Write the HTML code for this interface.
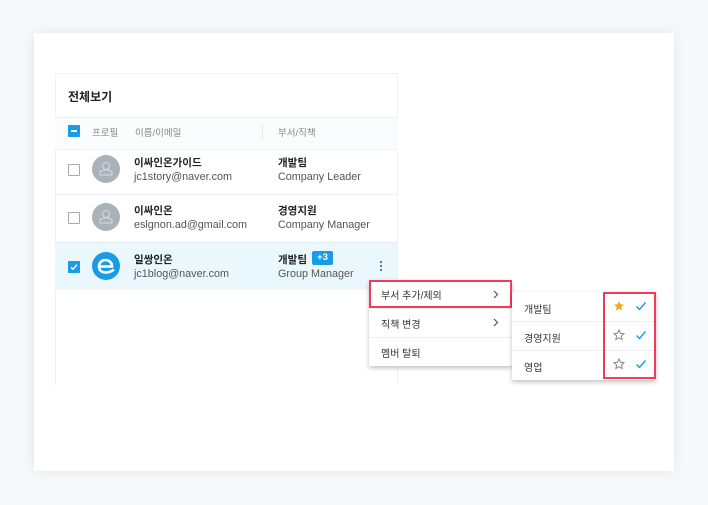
<!DOCTYPE html>
<html><head><meta charset="utf-8"><style>
*{box-sizing:border-box;margin:0;padding:0}
body{width:708px;height:505px;background:#f7f8fb;font-family:"Liberation Sans","Noto Sans CJK KR",sans-serif;position:relative;overflow:hidden;color:#333}
.card{position:absolute;left:34px;top:33px;width:640px;height:438px;background:#fff;box-shadow:0 0 12px rgba(0,0,0,.08)}
.panel{position:absolute;left:55px;top:73px;width:343px;height:312px;border:1px solid #f0f1f3;border-bottom:none;background:#fff}
.abs{position:absolute}
.t{position:absolute;white-space:nowrap}
.cb{position:absolute;width:12px;height:12px;border:1.5px solid #aaa;border-radius:1px;background:#fff}
.cbon{background:#1a9be6;border-color:#1a9be6}
.av{position:absolute;width:28px;height:28px;border-radius:50%;background:#a8b2b9}
.hl{position:absolute;height:1px;background:#eef0f2}
.menu{position:absolute;background:#fff;box-shadow:0 2px 5px rgba(0,0,0,.25);border-radius:2px}
.mi{position:absolute;left:0;right:0;height:1px;background:#eee}
.nm{font-size:10.5px;font-weight:bold;color:#222}
.sb{font-size:10.8px;color:#555}
</style></head><body>
<div class="card"></div>
<div class="panel"></div>
<div class="t" style="left:68px;top:88px;font-size:12px;font-weight:bold;color:#222">전체보기</div>
<div class="hl" style="left:55px;top:117px;width:343px"></div>
<div class="abs" style="left:55px;top:118px;width:343px;height:31px;background:#fbfcfd"></div>
<div class="cb cbon" style="left:68px;top:125px"></div>
<div class="abs" style="left:71px;top:130px;width:6px;height:1.5px;background:#fff"></div>
<div class="t" style="left:92px;top:125px;font-size:9.5px;color:#888">프로필</div>
<div class="t" style="left:135px;top:125px;font-size:9.5px;color:#888">이름/이메일</div>
<div class="abs" style="left:262px;top:124px;width:1px;height:16px;background:#e8e8e8"></div>
<div class="t" style="left:278px;top:125px;font-size:9.5px;color:#888">부서/직책</div>
<div class="hl" style="left:55px;top:149px;width:343px"></div>
<!-- row1 -->
<div class="cb" style="left:68px;top:164px"></div>
<div class="av" style="left:92px;top:155px"><svg width="28" height="28" viewBox="0 0 28 28"><circle cx="14" cy="11" r="3.5" fill="none" stroke="#cfd6da" stroke-width="1.2"/><path d="M8 20v-2c0-2 2-3 6-3s6 1 6 3v2z" fill="none" stroke="#cfd6da" stroke-width="1.2"/></svg></div>
<div class="t nm" style="left:134px;top:155px">이싸인온가이드</div>
<div class="t sb" style="left:134px;top:171px">jc1story@naver.com</div>
<div class="t nm" style="left:278px;top:155px">개발팀</div>
<div class="t sb" style="left:278px;top:171px">Company Leader</div>
<div class="hl" style="left:55px;top:194px;width:343px"></div>
<!-- row2 -->
<div class="cb" style="left:68px;top:212px"></div>
<div class="av" style="left:92px;top:203px"><svg width="28" height="28" viewBox="0 0 28 28"><circle cx="14" cy="11" r="3.5" fill="none" stroke="#cfd6da" stroke-width="1.2"/><path d="M8 20v-2c0-2 2-3 6-3s6 1 6 3v2z" fill="none" stroke="#cfd6da" stroke-width="1.2"/></svg></div>
<div class="t nm" style="left:134px;top:203px">이싸인온</div>
<div class="t sb" style="left:134px;top:219px">eslgnon.ad@gmail.com</div>
<div class="t nm" style="left:278px;top:203px">경영지원</div>
<div class="t sb" style="left:278px;top:219px">Company Manager</div>
<!-- row3 -->
<div class="abs" style="left:55px;top:242px;width:343px;height:48px;background:#eaf7fd;border-top:1px solid #e3eef3"></div>
<div class="cb cbon" style="left:68px;top:261px"></div>
<svg class="abs" style="left:68px;top:261px" width="12" height="12"><path d="M3 6.2l2 2 4-4.5" stroke="#fff" stroke-width="1.4" fill="none"/></svg>
<div class="abs" style="left:92px;top:252px;width:28px;height:28px;border-radius:50%;background:#1a9be6"></div>
<svg class="abs" style="left:92px;top:252px" width="28" height="28" viewBox="0 0 28 28"><path d="M7 14.5h13c0-4-3-6.5-6.5-6.5S7 10.5 7 14.5s3 6 7 6c3 0 6-1.5 8-3" fill="none" stroke="#fff" stroke-width="2.6"/></svg>
<div class="t nm" style="left:134px;top:252px">일쌍인온</div>
<div class="t sb" style="left:134px;top:268px">jc1blog@naver.com</div>
<div class="t nm" style="left:278px;top:252px">개발팀</div>
<div class="abs" style="left:312px;top:251px;width:21px;height:14px;background:#1a9be6;border-radius:2px;color:#fff;font-size:9.5px;font-weight:bold;text-align:center;line-height:14px">+3</div>
<div class="t sb" style="left:278px;top:268px">Group Manager</div>
<svg class="abs" style="left:379px;top:260px" width="4" height="12"><circle cx="2" cy="2" r="1.1" fill="#666"/><circle cx="2" cy="6" r="1.1" fill="#666"/><circle cx="2" cy="10" r="1.1" fill="#666"/></svg>
<!-- menu -->
<div class="menu" style="left:369px;top:280px;width:143px;height:86px">
<div class="mi" style="top:28px"></div><div class="mi" style="top:57px"></div>
</div>
<div class="abs" style="left:369px;top:280px;width:143px;height:28px;border:2px solid #f23b5a"></div>
<div class="t" style="left:381px;top:287px;font-size:10px;color:#333">부서 추가/제외</div>
<svg class="abs" style="left:493px;top:290px" width="6" height="9"><path d="M1 1l3.5 3.5L1 8" stroke="#555" stroke-width="1.2" fill="none"/></svg>
<div class="t" style="left:381px;top:316px;font-size:10px;color:#333">직책 변경</div>
<svg class="abs" style="left:493px;top:318px" width="6" height="9"><path d="M1 1l3.5 3.5L1 8" stroke="#555" stroke-width="1.2" fill="none"/></svg>
<div class="t" style="left:381px;top:345px;font-size:10px;color:#333">멤버 탈퇴</div>
<!-- submenu -->
<div class="menu" style="left:512px;top:292px;width:144px;height:88px">
<div class="mi" style="top:29px"></div><div class="mi" style="top:58px"></div>
</div>
<div class="t" style="left:524px;top:301px;font-size:10px;color:#333">개발팀</div>
<div class="t" style="left:524px;top:330px;font-size:10px;color:#333">경영지원</div>
<div class="t" style="left:524px;top:359px;font-size:10px;color:#333">영업</div>
<svg class="abs" style="left:613px;top:300px" width="12" height="12" viewBox="0 0 24 24"><path d="M12 2l3 6.5 7 .8-5.2 4.8 1.5 7L12 17.5 5.7 21l1.5-7L2 9.3l7-.8z" fill="#f5a623"/></svg>
<svg class="abs" style="left:613px;top:329px" width="12" height="12" viewBox="0 0 24 24"><path d="M12 2l3 6.5 7 .8-5.2 4.8 1.5 7L12 17.5 5.7 21l1.5-7L2 9.3l7-.8z" fill="none" stroke="#888" stroke-width="2"/></svg>
<svg class="abs" style="left:613px;top:358px" width="12" height="12" viewBox="0 0 24 24"><path d="M12 2l3 6.5 7 .8-5.2 4.8 1.5 7L12 17.5 5.7 21l1.5-7L2 9.3l7-.8z" fill="none" stroke="#888" stroke-width="2"/></svg>
<svg class="abs" style="left:635px;top:300px" width="12" height="12"><path d="M1.5 6.5l3 3 6-7" stroke="#1a9be6" stroke-width="1.4" fill="none"/></svg>
<svg class="abs" style="left:635px;top:329px" width="12" height="12"><path d="M1.5 6.5l3 3 6-7" stroke="#1a9be6" stroke-width="1.4" fill="none"/></svg>
<svg class="abs" style="left:635px;top:358px" width="12" height="12"><path d="M1.5 6.5l3 3 6-7" stroke="#1a9be6" stroke-width="1.4" fill="none"/></svg>
<div class="abs" style="left:603px;top:292px;width:53px;height:87px;border:2px solid #f23b5a"></div>
</body></html>
